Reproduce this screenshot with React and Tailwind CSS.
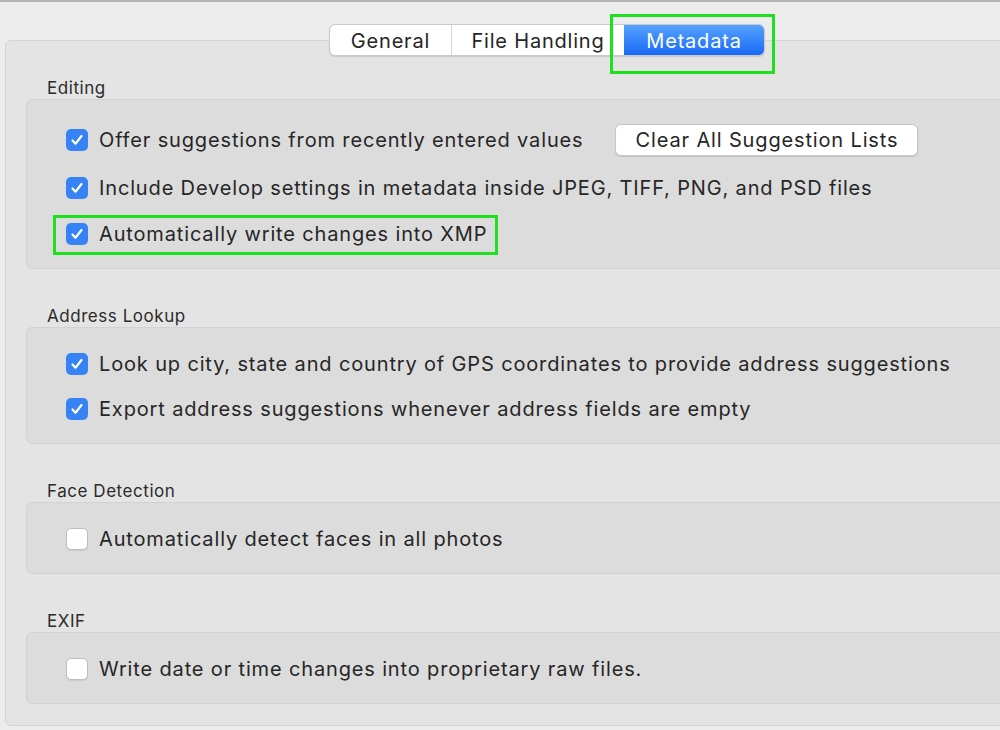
import React from 'react';

const font = { fontFamily: 'Inter, "Noto Sans", sans-serif' };

function Checkbox({ checked }) {
  if (!checked) {
    return <span className="h-[22px] w-[22px] shrink-0 rounded-[5px] border border-[#bdbdbd] bg-white shadow-[0_1px_1px_rgba(0,0,0,0.08)]" />;
  }
  return (
    <span className="flex h-[22px] w-[22px] shrink-0 items-center justify-center rounded-[5px] bg-[#3783f6]">
      <svg width="16" height="16" viewBox="0 0 16 16" fill="none">
        <path d="M3.5 8.5l3 3.2L12.5 4" stroke="white" strokeWidth="2.2" strokeLinecap="round" strokeLinejoin="round" />
      </svg>
    </span>
  );
}

function Row({ checked, children, className = '' }) {
  return (
    <div className={`flex h-8 items-center pl-[39px] ${className}`}>
      <Checkbox checked={checked} />
      <span className="ml-[11px] whitespace-nowrap text-[20px] tracking-[0.85px] text-[#262626]">{children}</span>
    </div>
  );
}

function Section({ title, height, children }) {
  return (
    <div>
      <div className="h-5 pl-[41px] text-[17px] leading-5 tracking-[0.55px] text-[#2b2b2b]">{title}</div>
      <div
        className="mt-px ml-5 w-[1000px] rounded-md border border-[#d2d2d2] bg-[#dcdcdc]"
        style={{ height }}
      >
        {children}
      </div>
    </div>
  );
}

export default function App() {
  return (
    <div className="h-[730px] w-[1000px] overflow-hidden border-t-2 border-[#b5b5b5] bg-[#ececec]" style={font}>
      <div className="relative z-10 flex pt-[22px] pl-[329px]">
        <div className="flex h-8 overflow-hidden rounded-[6px] border border-[#c9c9c9] bg-white text-[20px] tracking-[0.8px] shadow-[0_1px_1px_rgba(0,0,0,0.12)]">
          <div className="flex w-[121px] items-center justify-center pt-px text-[#262626]">General</div>
          <div className="flex w-[173px] items-center justify-center border-l border-[#d4d4d4] pt-px text-[#262626]">File Handling</div>
          <div className="flex w-[140px] items-center justify-center bg-gradient-to-b from-[#55a1fd] to-[#1769f4] pt-px text-white">Metadata</div>
        </div>
        <div className="absolute top-[12px] left-[610px] h-[60px] w-[165px] border-[3px] border-[#1ee01e]" />
      </div>

      <div className="-mt-4 ml-[5px] h-[686px] w-[1020px] rounded-md border border-[#d4d4d4] bg-[#e4e4e4] pt-[37px]">
        <Section title="Editing" height={170}>
          <div className="mt-[24px] flex items-center">
            <Row checked>Offer suggestions from recently entered values</Row>
            <button className="ml-[32px] h-8 w-[303px] rounded-[6px] border border-[#c6c6c6] bg-white text-[20px] tracking-[0.85px] text-[#262626] shadow-[0_1px_1px_rgba(0,0,0,0.12)]">
              Clear All Suggestion Lists
            </button>
          </div>
          <Row checked className="mt-4">Include Develop settings in metadata inside JPEG, TIFF, PNG, and PSD files</Row>
          <div className="relative mt-[14px]">
            <Row checked>Automatically write changes into XMP</Row>
            <div className="absolute top-[-3px] left-[26px] h-[40px] w-[445px] border-[3px] border-[#1ee01e]" />
          </div>
        </Section>

        <div className="mt-[37px]">
          <Section title="Address Lookup" height={117}>
            <Row checked className="mt-[20px]">Look up city, state and country of GPS coordinates to provide address suggestions</Row>
            <Row checked className="mt-[13px]">Export address suggestions whenever address fields are empty</Row>
          </Section>
        </div>

        <div className="mt-[37px]">
          <Section title="Face Detection" height={72}>
            <Row className="mt-[20px]">Automatically detect faces in all photos</Row>
          </Section>
        </div>

        <div className="mt-[37px]">
          <Section title="EXIF" height={72}>
            <Row className="mt-[20px]">Write date or time changes into proprietary raw files.</Row>
          </Section>
        </div>
      </div>
    </div>
  );
}
